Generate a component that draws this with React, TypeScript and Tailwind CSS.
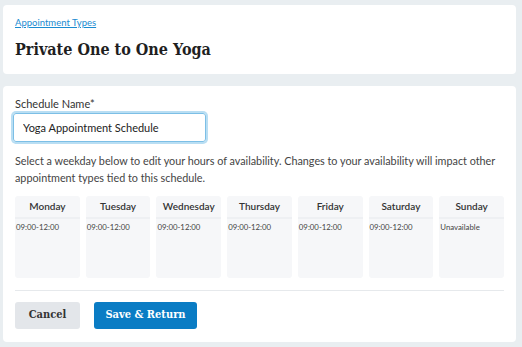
import { useState } from "react";

const days = [
  { name: "Monday", hours: "09:00-12:00" },
  { name: "Tuesday", hours: "09:00-12:00" },
  { name: "Wednesday", hours: "09:00-12:00" },
  { name: "Thursday", hours: "09:00-12:00" },
  { name: "Friday", hours: "09:00-12:00" },
  { name: "Saturday", hours: "09:00-12:00" },
  { name: "Sunday", hours: "Unavailable" },
];

const sans = "font-['Lato','Open_Sans',sans-serif]";
const slab = "font-['DejaVu_Serif','Liberation_Serif',serif] font-stretch-condensed";

export default function App() {
  const [scheduleName, setScheduleName] = useState("Yoga Appointment Schedule");

  return (
    <div className={`min-h-[347px] bg-[#e9eef1] pl-[3px] pr-[6px] pt-[5px] pb-[5px] ${sans}`}>
      {/* Header card */}
      <div className="h-[69px] rounded-[4px] bg-white px-3 pt-[12px]">
        <a href="#" className="block text-[9.5px] leading-[12px] text-[#1a8bd1] underline">
          Appointment Types
        </a>
        <h1 className={`mt-[10px] text-[16px] font-bold leading-[22px] text-[#1f1f1f] ${slab}`}>
          Private One to One Yoga
        </h1>
      </div>

      {/* Schedule card */}
      <div className="mt-3 h-[256px] rounded-[4px] bg-white px-3 pt-[11px]">
        <label className="block text-[11px] leading-[14px] text-[#333]">Schedule Name*</label>
        <input
          value={scheduleName}
          onChange={(e) => setScheduleName(e.target.value)}
          className="mt-[2px] h-[29px] w-[193px] -ml-[2px] rounded-[3px] border border-[#7cbfe6] px-[9px] text-[11px] text-[#222] shadow-[0_0_0_2px_#b9def3] outline-none"
        />
        <p className="mt-[10px] text-[10.8px] leading-[17px] text-[#444]">
          Select a weekday below to edit your hours of availability. Changes to your availability will impact other
          appointment types tied to this schedule.
        </p>

        <div className="mt-[10px] grid grid-cols-7 gap-[6px]">
          {days.map((d) => (
            <div key={d.name} className="h-[82px] rounded-[3px] bg-[#f6f7f9]">
              <div className="h-[23px] border-b-2 border-[#eef0f3] pt-[4px] text-center text-[10px] leading-[13px] font-semibold text-[#333]">
                {d.name}
              </div>
              <div className="px-[1px] pt-[3px] text-[7.8px] leading-[10px] text-[#444]">{d.hours}</div>
            </div>
          ))}
        </div>

        <div className="mt-[12px] h-px bg-[#e6e9ec]" />

        <div className="mt-[11px] flex gap-[14px]">
          <button className={`h-[27px] w-[65px] rounded-[3px] bg-[#e3e6ea] text-[11px] font-bold text-[#333] ${slab}`}>
            Cancel
          </button>
          <button className={`h-[27px] w-[103px] rounded-[3px] bg-[#0a7cc4] text-[11px] font-bold text-white ${slab}`}>
            Save &amp; Return
          </button>
        </div>
      </div>
    </div>
  );
}
